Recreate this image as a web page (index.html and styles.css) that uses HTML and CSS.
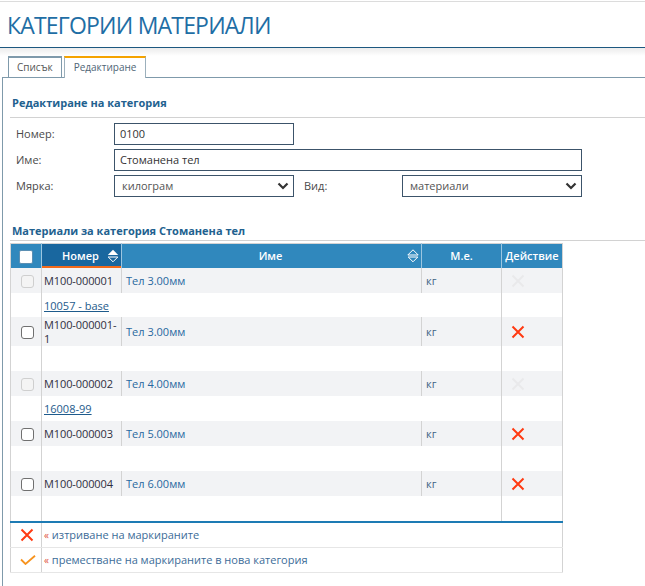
FILE: index.html
```html
<!DOCTYPE html>
<html lang="bg">
<head>
<meta charset="utf-8">
<title>Категории материали</title>
<link rel="stylesheet" href="styles.css">
</head>
<body>
<header class="page-header">
  <h1 class="page-title">КАТЕГОРИИ МАТЕРИАЛИ</h1>
</header>
<div class="header-shade"></div>
<nav class="tabs">
  <span class="tab">Списък</span>
  <span class="tab active">Редактиране</span>
</nav>
<main class="panel">
  <h2 class="section-title first">Редактиране на категория</h2>
  <div class="form">
    <span class="label">Номер:</span>
    <div class="field short">0100</div>
    <span class="label r2">Име:</span>
    <div class="field long">Стоманена тел</div>
    <span class="label r3">Мярка:</span>
    <div class="field select r3">килограм<svg class="chev" viewBox="0 0 12 8" width="12" height="8"><path d="M1.5 1.5 L6 6 L10.5 1.5" fill="none" stroke="#333" stroke-width="2.2"/></svg></div>
    <span class="label r3 c4">Вид:</span>
    <div class="field select r3 c5">материали<svg class="chev" viewBox="0 0 12 8" width="12" height="8"><path d="M1.5 1.5 L6 6 L10.5 1.5" fill="none" stroke="#333" stroke-width="2.2"/></svg></div>
  </div>
  <h2 class="section-title second">Материали за категория Стоманена тел</h2>
  <table class="materials">
    <colgroup>
      <col class="col-check"><col class="col-num"><col class="col-name"><col class="col-unit"><col class="col-act">
    </colgroup>
    <thead>
      <tr>
        <th><span class="cb head"></span></th>
        <th class="sorted"><div class="th-in"><span class="th-text">Номер</span><svg class="sort" viewBox="0 0 12 14" width="12" height="14"><path d="M6 0.8 L11.2 6 H0.8 Z" fill="#fff"/><path d="M1.2 8 H10.8 L6 12.8 Z" fill="none" stroke="#fff" stroke-width="1"/></svg></div></th>
        <th><div class="th-in"><span class="th-text">Име</span><svg class="sort" viewBox="0 0 12 14" width="12" height="14"><path d="M6 0.8 L11.2 6 H0.8 Z" fill="none" stroke="#fff" stroke-width="1"/><path d="M1.2 8 H10.8 L6 12.8 Z" fill="none" stroke="#fff" stroke-width="1"/></svg></div></th>
        <th>М.е.</th>
        <th>Действие</th>
      </tr>
    </thead>
    <tbody>
      <tr class="item">
        <td class="check"><span class="cb off"></span></td>
        <td class="num">M100-000001</td>
        <td class="name">Тел 3.00мм</td>
        <td class="unit">кг</td>
        <td class="act"><svg class="x off" viewBox="0 0 14 14" width="14" height="14"><path d="M1.5 1.5 L12.5 12.5 M12.5 1.5 L1.5 12.5" stroke="currentColor" stroke-width="2"/></svg></td>
      </tr>
      <tr class="sub first-sub">
        <td class="check"></td>
        <td colspan="3"><a href="#" class="ref">10057 - base</a></td>
        <td class="act"></td>
      </tr>
      <tr class="item tall">
        <td class="check"><span class="cb"></span></td>
        <td class="num">M100-000001-<br>1</td>
        <td class="name">Тел 3.00мм</td>
        <td class="unit">кг</td>
        <td class="act"><svg class="x" viewBox="0 0 14 14" width="14" height="14"><path d="M1.5 1.5 L12.5 12.5 M12.5 1.5 L1.5 12.5" stroke="currentColor" stroke-width="2"/></svg></td>
      </tr>
      <tr class="sub">
        <td class="check"></td>
        <td colspan="3"></td>
        <td class="act"></td>
      </tr>
      <tr class="item">
        <td class="check"><span class="cb off"></span></td>
        <td class="num">M100-000002</td>
        <td class="name">Тел 4.00мм</td>
        <td class="unit">кг</td>
        <td class="act"><svg class="x off" viewBox="0 0 14 14" width="14" height="14"><path d="M1.5 1.5 L12.5 12.5 M12.5 1.5 L1.5 12.5" stroke="currentColor" stroke-width="2"/></svg></td>
      </tr>
      <tr class="sub">
        <td class="check"></td>
        <td colspan="3"><a href="#" class="ref">16008-99</a></td>
        <td class="act"></td>
      </tr>
      <tr class="item">
        <td class="check"><span class="cb"></span></td>
        <td class="num">M100-000003</td>
        <td class="name">Тел 5.00мм</td>
        <td class="unit">кг</td>
        <td class="act"><svg class="x" viewBox="0 0 14 14" width="14" height="14"><path d="M1.5 1.5 L12.5 12.5 M12.5 1.5 L1.5 12.5" stroke="currentColor" stroke-width="2"/></svg></td>
      </tr>
      <tr class="sub">
        <td class="check"></td>
        <td colspan="3"></td>
        <td class="act"></td>
      </tr>
      <tr class="item">
        <td class="check"><span class="cb"></span></td>
        <td class="num">M100-000004</td>
        <td class="name">Тел 6.00мм</td>
        <td class="unit">кг</td>
        <td class="act"><svg class="x" viewBox="0 0 14 14" width="14" height="14"><path d="M1.5 1.5 L12.5 12.5 M12.5 1.5 L1.5 12.5" stroke="currentColor" stroke-width="2"/></svg></td>
      </tr>
      <tr class="sub">
        <td class="check"></td>
        <td colspan="3"></td>
        <td class="act"></td>
      </tr>
    </tbody>
    <tfoot>
      <tr>
        <td class="check"><svg class="x" viewBox="0 0 14 14" width="14" height="14"><path d="M1.5 1.5 L12.5 12.5 M12.5 1.5 L1.5 12.5" stroke="currentColor" stroke-width="2"/></svg></td>
        <td colspan="4"><span class="raquo">«</span> изтриване на маркираните</td>
      </tr>
      <tr>
        <td class="check"><svg class="tick" viewBox="0 0 16 10" width="16" height="10"><path d="M1 4.5 L5.5 9 L15 0.8" fill="none" stroke="currentColor" stroke-width="1.8"/></svg></td>
        <td colspan="4"><span class="raquo">«</span> преместване на маркираните в нова категория</td>
      </tr>
    </tfoot>
  </table>
</main>
</body>
</html>
```

FILE: styles.css
```css
html, body {
  margin: 0;
  padding: 0;
  background: #fff;
}

body {
  font-family: "Open Sans", "Noto Sans", sans-serif;
  font-size: 11px;
  color: #444;
  min-height: 586px;
  display: flex;
  flex-direction: column;
}

.page-header {
  margin-top: 1px;
  border-top: 1px solid #dcdcdc;
  border-bottom: 1px solid #1d5880;
  height: 45px;
  box-sizing: content-box;
}

.page-title {
  margin: 0;
  padding: 8px 0 0 7px;
  font-size: 23px;
  line-height: 30px;
  font-weight: 400;
  color: #1f6ea5;
  letter-spacing: -0.8px;
}

.header-shade {
  height: 8px;
  background: linear-gradient(#ececec, #fff);
}

.tabs {
  display: flex;
  gap: 2px;
  padding-left: 8px;
  margin-bottom: -1px;
  position: relative;
  z-index: 1;
}

.tab {
  display: block;
  height: 19px;
  line-height: 19px;
  padding: 0 8px;
  border: 1px solid #7f9aab;
  border-top-width: 2px;
  border-bottom: 0;
  color: #555;
  background: #fff;
  font-size: 10px;
}

.tab.active {
  border-color: #f5a300 #9cb0bc #fff #9cb0bc;
  height: 20px;
  padding: 0 9px;
  color: #4f6576;
}

.panel {
  flex: 1;
  margin-left: 2px;
  border-top: 1px solid #7f9aab;
  border-left: 1px solid #7f9aab;
  padding-left: 7px;
}

.section-title {
  margin: 0;
  font-size: 11px;
  font-weight: 700;
  color: #22618f;
  line-height: 16px;
  padding-left: 2px;
  border-bottom: 1px solid #d2d2d2;
}

.section-title.first {
  margin-top: 17px;
  padding-bottom: 6px;
}

.section-title.second {
  margin-top: 26px;
  padding-bottom: 1px;
}

.form {
  display: grid;
  grid-template-columns: 98px 180px 10px 98px 180px;
  grid-auto-rows: 22px;
  row-gap: 4px;
  margin: 5px 0 0 6px;
}

.label {
  grid-column: 1;
  align-self: center;
  color: #4a4a4a;
  line-height: 16px;
  margin-top: -1px;
}

.label.r2 { grid-row: 2; }
.label.r3 { grid-row: 3; }
.label.c4 { grid-column: 4; }

.field {
  grid-column: 2;
  border: 1px solid #3c546a;
  box-sizing: border-box;
  padding: 0 5px;
  line-height: 20px;
  color: #333;
  font-size: 11px;
}

.field.long {
  grid-column: 2 / span 4;
  grid-row: 2;
}

.field.r3 { grid-row: 3; }
.field.c5 { grid-column: 5; }

.field.select {
  display: flex;
  align-items: center;
  justify-content: space-between;
  padding: 0 4px 0 7px;
  color: #555;
}

.chev { display: block; }

.materials {
  margin-top: 2px;
  width: 552px;
  table-layout: fixed;
  border-collapse: collapse;
  border: 1px solid #d3d3d3;
  font-size: 11px;
}

.col-check { width: 31px; }
.col-num { width: 80px; }
.col-name { width: 300px; }
.col-unit { width: 80px; }
.col-act { width: 61px; }

.materials th {
  background: #3088bd;
  color: #fff;
  font-weight: 600;
  height: 24px;
  padding: 0;
  border-left: 1px solid #9cc6e0;
  text-align: center;
  vertical-align: middle;
  line-height: 14px;
}

.materials th:first-child { border-left: 0; }

.materials th.sorted {
  background: #19679f;
  box-shadow: inset 0 -2px 0 #f26a1b;
}

.th-in {
  display: grid;
  grid-template-columns: 1fr auto 1fr;
  align-items: center;
  padding-right: 2px;
}

.th-text { grid-column: 2; }

.sort {
  grid-column: 3;
  justify-self: end;
  display: block;
}

.cb {
  display: inline-block;
  width: 13px;
  height: 13px;
  box-sizing: border-box;
  border: 1px solid #707070;
  border-radius: 3px;
  background: #fff;
  vertical-align: middle;
}

.cb.head {
  width: 14px;
  height: 14px;
  border-color: #5b8fb3;
  border-radius: 2px;
}

.cb.off {
  border-color: #cfcfcf;
  background: #f4f4f4;
}

.materials td {
  padding: 0 4px;
  height: 25px;
  vertical-align: middle;
  line-height: 13px;
}

.materials tbody td.check,
.materials tfoot td.check {
  text-align: center;
  padding: 0 0 0 2px;
  border-right: 1px solid #d3d3d3;
}

.item td {
  background: #f2f3f5;
  border-left: 1px solid #d3d3d3;
}

.item.tall td { height: 29px; }

.item.tall .num { line-height: 14px; }

.first-sub td { height: 24px; }

.item .num {
  color: #2f2f3f;
  padding-left: 2px;
  letter-spacing: -0.1px;
}

.item .name { color: #2868a0; }

.item .unit { color: #3f6385; }

.materials td.act {
  border-left: 1px solid #d3d3d3;
  padding: 0 0 0 9px;
}

.x {
  display: block;
  color: #ff3a12;
}

.x.off { color: #e9e9eb; }

.sub td { background: #fff; }

.sub td:nth-child(2) { padding-left: 2px; }

.ref {
  color: #1e5b8c;
  text-decoration: underline;
}

.materials tfoot tr:first-child td {
  border-top: 2px solid #1d7bb4;
}

.materials tfoot td {
  height: 24px;
  color: #3c6c98;
  border-bottom: 1px solid #e6e6e6;
  padding-left: 2px;
}

.materials tfoot td.check {
  padding-left: 9px;
  text-align: left;
}

.tick {
  display: block;
  color: #f7931e;
}

.raquo {
  color: #e0503c;
  font-size: 10px;
}
```
